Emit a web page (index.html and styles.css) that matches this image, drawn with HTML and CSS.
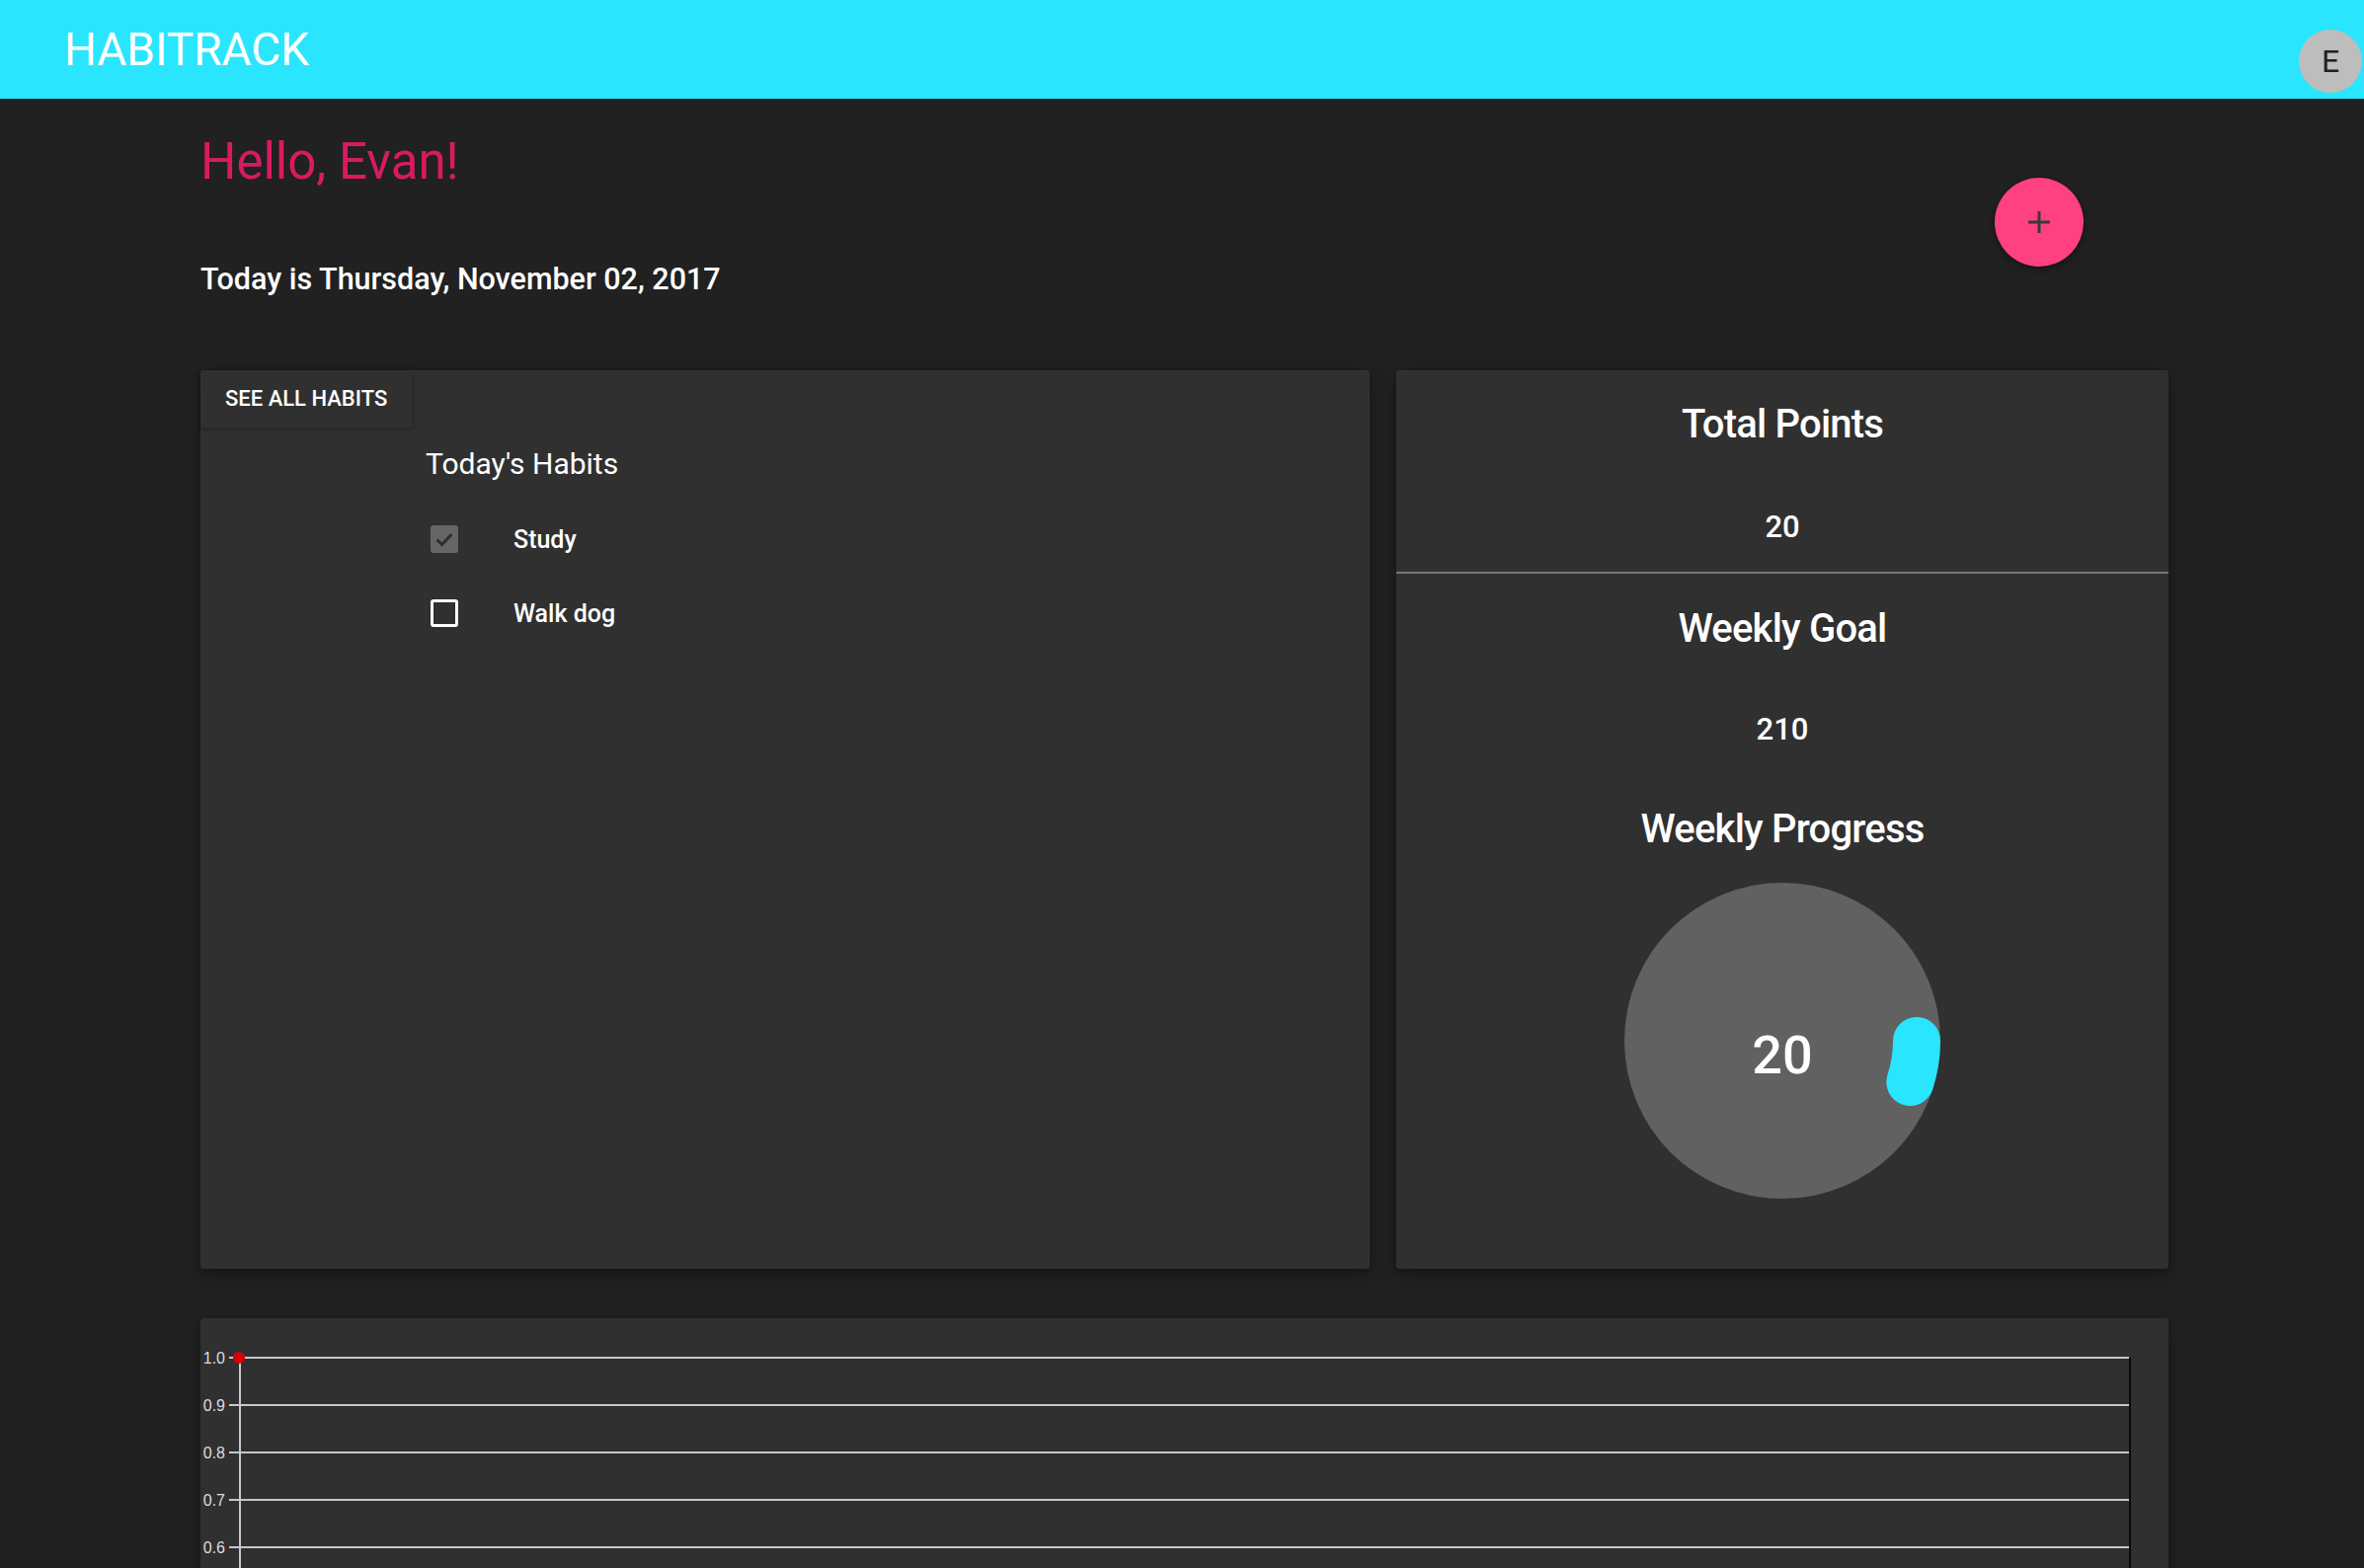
FILE: index.html
```html
<!DOCTYPE html>
<html lang="en">
<head>
<meta charset="utf-8">
<title>Habitrack</title>
<link rel="stylesheet" href="styles.css">
</head>
<body>
<header class="appbar">
  <div class="brand">HABITRACK</div>
  <div class="avatar">E</div>
</header>
<main class="page">
  <section class="intro">
    <div class="intro-text">
      <h1 class="greeting">Hello, Evan!</h1>
      <p class="today">Today is Thursday, November 02, 2017</p>
    </div>
    <button class="fab" aria-label="Add habit">
      <svg width="24" height="24" viewBox="0 0 24 24"><path d="M12 1v22M1 12h22" stroke="#3a3a3a" stroke-width="3" fill="none"/></svg>
    </button>
  </section>

  <section class="dashboard">
    <div class="card habits-card">
      <button class="see-all">SEE ALL HABITS</button>
      <div class="habits">
        <h2 class="habits-title">Today's Habits</h2>
        <ul class="habit-list">
          <li class="habit">
            <span class="check checked"><svg width="28" height="28" viewBox="0 0 28 28"><path d="M6.5 14.5l5 5L21.5 9" stroke="#2f2f2f" stroke-width="3" fill="none"/></svg></span>
            <span class="habit-name">Study</span>
          </li>
          <li class="habit">
            <span class="check empty"></span>
            <span class="habit-name">Walk dog</span>
          </li>
        </ul>
      </div>
    </div>

    <div class="card stats-card">
      <h2 class="stat-title">Total Points</h2>
      <p class="stat-value">20</p>
      <hr class="divider">
      <h2 class="stat-title goal-title">Weekly Goal</h2>
      <p class="stat-value value-tight">210</p>
      <h2 class="stat-title progress-title">Weekly Progress</h2>
      <svg class="progress" width="320" height="320" viewBox="0 0 320 320">
        <circle cx="160" cy="160" r="160" fill="#616161"/>
        <path d="M296 160 A136 136 0 0 1 289.3 202" stroke="#2ae5fe" stroke-width="48" stroke-linecap="round" fill="none"/>
        <text x="160" y="193" text-anchor="middle" class="progress-num">20</text>
      </svg>
    </div>
  </section>

  <section class="card chart-card">
    <svg class="chart" width="1993" height="290" viewBox="0 0 1993 290">
      <g class="grid">
        <line x1="29" y1="40" x2="1953" y2="40"/>
        <line x1="29" y1="88" x2="1953" y2="88"/>
        <line x1="29" y1="136" x2="1953" y2="136"/>
        <line x1="29" y1="184" x2="1953" y2="184"/>
        <line x1="29" y1="232" x2="1953" y2="232"/>
        <line x1="29" y1="280" x2="1953" y2="280"/>
        <line x1="40" y1="40" x2="40" y2="290"/>
      </g>
      <line class="edge" x1="1954" y1="40" x2="1954" y2="290"/>
      <g class="labels">
        <text x="25" y="45.5">1.0</text>
        <text x="25" y="93.5">0.9</text>
        <text x="25" y="141.5">0.8</text>
        <text x="25" y="189.5">0.7</text>
        <text x="25" y="237.5">0.6</text>
      </g>
      <circle cx="39" cy="40" r="6" fill="#d50000"/>
    </svg>
  </section>
</main>
</body>
</html>
```

FILE: styles.css
```css
body {
  margin: 0;
  background: #212121;
  color: #ffffff;
  font-family: Roboto, "Noto Sans", "Liberation Sans", sans-serif;
}

.appbar {
  height: 100px;
  background: #2ae5fe;
  display: flex;
  justify-content: space-between;
  align-items: flex-start;
}

.brand {
  font-size: 46px;
  line-height: 100px;
  padding-left: 65px;
  color: #ffffff;
}

.avatar {
  width: 64px;
  height: 64px;
  margin-top: 30px;
  margin-right: 2px;
  border-radius: 50%;
  background: #bdbdbd;
  color: #212121;
  font-size: 32px;
  display: flex;
  align-items: center;
  justify-content: center;
}

.page {
  width: 1993px;
  margin-left: 203px;
  padding-top: 33px;
}

.intro {
  display: flex;
  justify-content: space-between;
  align-items: flex-start;
}

.greeting {
  margin: 0;
  font-size: 51px;
  line-height: 1.2;
  font-weight: 400;
  color: #d81b60;
}

.today {
  margin: 71px 0 0;
  font-size: 30.5px;
  line-height: 1.2;
  font-weight: 500;
}

.fab {
  width: 90px;
  height: 90px;
  margin-top: 47px;
  margin-right: 86px;
  padding: 0;
  border: 0;
  border-radius: 50%;
  background: #ff4081;
  box-shadow: 0 3px 10px rgba(0, 0, 0, 0.35), 0 1px 3px rgba(0, 0, 0, 0.2);
  display: flex;
  align-items: center;
  justify-content: center;
}

.dashboard {
  display: grid;
  grid-template-columns: 1184px 782px;
  gap: 27px;
  margin-top: 73px;
}

.card {
  background: #303030;
  border-radius: 3px;
  box-shadow: 0 2px 6px rgba(0, 0, 0, 0.3), 0 8px 22px rgba(0, 0, 0, 0.22);
}

.see-all {
  height: 58px;
  padding: 0 25px;
  border: 0;
  border-radius: 3px;
  background: #303030;
  color: #ffffff;
  font-family: inherit;
  font-size: 22px;
  font-weight: 500;
  box-shadow: 0 2px 5px rgba(0, 0, 0, 0.25);
  display: flex;
  align-items: center;
}

.habits {
  margin-left: 228px;
  margin-top: 19px;
}

.habits-title {
  margin: 0;
  font-size: 30px;
  line-height: 36px;
  font-weight: 400;
}

.habit-list {
  list-style: none;
  margin: 21px 0 0;
  padding: 0;
}

.habit {
  height: 75px;
  display: flex;
  align-items: center;
}

.check {
  width: 28px;
  height: 28px;
  margin-left: 5px;
  margin-right: 56px;
  box-sizing: border-box;
  border-radius: 3px;
  display: block;
}

.check svg {
  display: block;
}

.checked {
  background: #666666;
}

.empty {
  border: 3px solid #ffffff;
}

.habit-name {
  font-size: 25px;
  font-weight: 500;
}

.stats-card {
  padding: 31px 0 71px;
  display: flex;
  flex-direction: column;
  align-items: center;
  text-align: center;
}

.stat-title {
  margin: 0;
  font-size: 40px;
  line-height: 48px;
  font-weight: 500;
  letter-spacing: -0.8px;
}

.stat-value {
  margin: 61px 0 0;
  font-size: 31px;
  line-height: 37px;
  font-weight: 500;
}

.divider {
  align-self: stretch;
  height: 2px;
  margin: 27px 0 0;
  border: 0;
  background: #777777;
}

.goal-title {
  margin-top: 32px;
}

.value-tight {
  margin-top: 59px;
}

.progress-title {
  margin-top: 59px;
}

.progress {
  margin-top: 30px;
  display: block;
}

.progress-num {
  font-family: Roboto, "Noto Sans", sans-serif;
  font-size: 54px;
  font-weight: 500;
  fill: #ffffff;
}

.chart-card {
  margin-top: 50px;
  height: 290px;
  overflow: hidden;
}

.chart {
  display: block;
}

.grid line {
  stroke: #c8c8c8;
  stroke-width: 2;
}

.edge {
  stroke: #0a0a0a;
  stroke-width: 2;
}

.labels text {
  font-family: "Liberation Sans", Arial, sans-serif;
  font-size: 16px;
  fill: #dddddd;
  text-anchor: end;
}
```
